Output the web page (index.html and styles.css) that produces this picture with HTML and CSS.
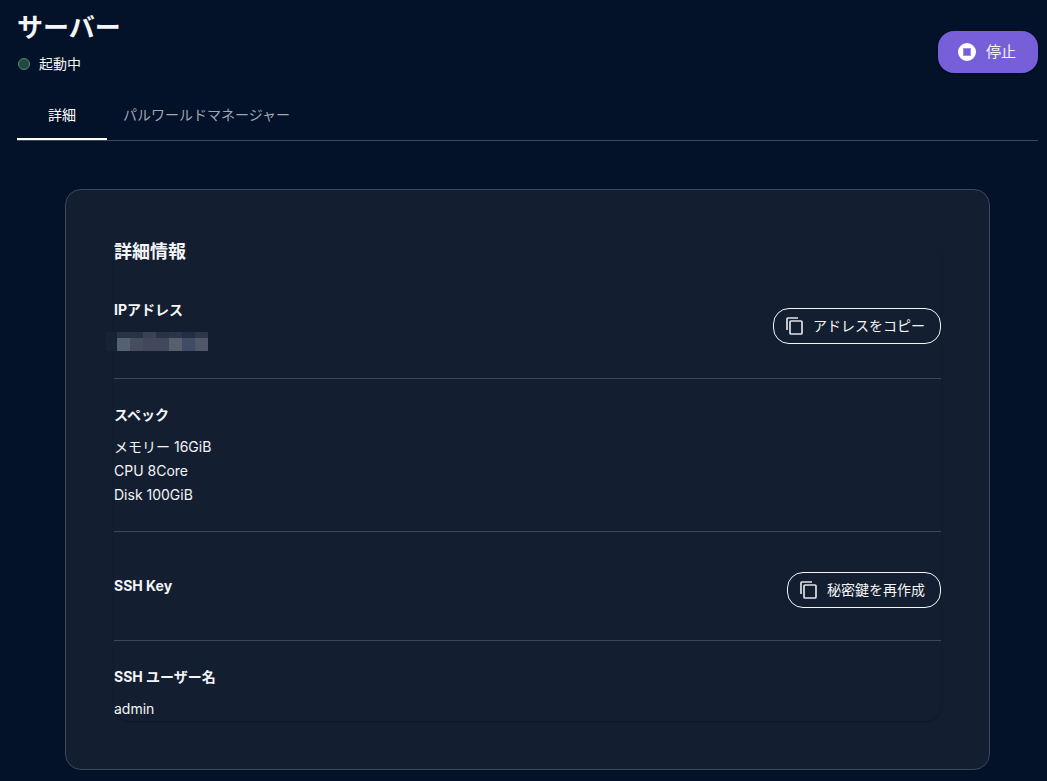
FILE: index.html
```html
<!DOCTYPE html>
<html lang="ja">
<head>
  <meta charset="UTF-8">
  <title>サーバー</title>
  <meta name="viewport" content="width=device-width, initial-scale=1.0">
  <link rel="stylesheet" href="styles.css">
</head>
<body>
  <header class="page-header">
    <div>
      <h1>サーバー</h1>
      <p class="status"><span class="status-dot"></span>起動中</p>
    </div>
    <button type="button" class="stop-btn">
      <svg width="20" height="20" viewBox="0 0 20 20" aria-hidden="true">
        <path fill="#fff" fill-rule="evenodd" d="M10 1a9 9 0 1 0 0 18a9 9 0 0 0 0-18zM6 6h8v8H6z"/>
        <path fill="#fff" fill-rule="evenodd" d="M6 6h8v8H6zM7 7v6h6V7z" opacity=".3"/>
      </svg>
      停止
    </button>
  </header>

  <nav class="tabs">
    <a href="#detail" class="active">詳細</a>
    <a href="#manager">パルワールドマネージャー</a>
  </nav>

  <main class="card" id="detail">
    <div class="card-inner">
      <h2>詳細情報</h2>

      <section class="row">
        <div>
          <h3>IPアドレス</h3>
          <!-- masked address -->
          <div class="masked">
            <svg width="102" height="20" viewBox="0 0 102 20" shape-rendering="crispEdges" role="img" aria-label="非表示">
              <path fill="#172235" d="M0 0h11v19H0z"/>
              <path fill="#273347" d="M11 0h26v6H11z"/>
              <path fill="#3b4253" d="M37 0h13v6H37z"/>
              <path fill="#263247" d="M50 0h13v6H50z"/>
              <path fill="#2b3448" d="M63 0h13v6H63z"/>
              <path fill="#212e44" d="M76 0h13v6H76z"/>
              <path fill="#2d364a" d="M89 0h13v6H89z"/>
              <path fill="#536170" d="M11 6h13v13H11z"/>
              <path fill="#464e5e" d="M24 6h13v13H24z"/>
              <path fill="#40485a" d="M37 6h26v13H37z"/>
              <path fill="#595e6d" d="M63 6h13v13H63z"/>
              <path fill="#404c65" d="M76 6h13v13H76z"/>
              <path fill="#505868" d="M89 6h13v13H89z"/>
            </svg>
          </div>
        </div>
        <button type="button" class="copy-btn">
          <svg width="20" height="20" viewBox="0 0 20 20" aria-hidden="true">
            <path d="M2 14V3q0-1 1-1h10"/>
            <rect x="5" y="5" width="12" height="13" rx="1"/>
          </svg>
          アドレスをコピー
        </button>
      </section>

      <section class="row">
        <div>
          <h3>スペック</h3>
          <p>メモリー 16GiB</p>
          <p>CPU 8Core</p>
          <p>Disk 100GiB</p>
        </div>
      </section>

      <section class="row key-row">
        <h3>SSH Key</h3>
        <button type="button" class="copy-btn">
          <svg width="20" height="20" viewBox="0 0 20 20" aria-hidden="true">
            <path d="M2 14V3q0-1 1-1h10"/>
            <rect x="5" y="5" width="12" height="13" rx="1"/>
          </svg>
          秘密鍵を再作成
        </button>
      </section>

      <section class="row">
        <div>
          <h3>SSH ユーザー名</h3>
          <p>admin</p>
        </div>
      </section>
    </div>
  </main>
</body>
</html>
```

FILE: styles.css
```css
* {
  box-sizing: border-box;
}
body {
  margin: 0;
  padding: 8px 9px 11px 17px;
  background-color: #031129;
  color: #f4f5f7;
  font-family: Inter, "Noto Sans CJK JP", sans-serif;
  font-size: 14px;
  line-height: 24px;
}
h1, h2, h3, p {
  margin: 0;
}
h1 {
  font-size: 26px;
  line-height: 40px;
}
h2 {
  font-size: 18px;
  line-height: 28px;
  margin-bottom: 8px;
}
h3 {
  font-size: 14px;
  font-weight: 700;
  margin-bottom: 8px;
}
.page-header {
  display: flex;
  justify-content: space-between;
  align-items: flex-start;
  height: 88px;
}
.status {
  display: flex;
  align-items: center;
  gap: 9px;
  margin-top: 4px;
}
.status-dot {
  width: 12px;
  height: 12px;
  margin-left: 1px;
  border: 1px solid #3f9474;
  border-radius: 50%;
  background-color: #24483f;
}
button {
  display: flex;
  align-items: center;
  flex-shrink: 0;
  color: #f4f5f7;
  font-family: inherit;
  font-size: 14px;
  line-height: 24px;
  cursor: pointer;
}
.stop-btn {
  align-self: center;
  gap: 9px;
  height: 42px;
  padding: 0 22px 0 19px;
  border: none;
  border-radius: 16px;
  background-color: #765fd9;
  font-size: 15px;
  box-shadow: 0 1px 2px rgba(0, 0, 0, 0.3);
}
.tabs {
  display: flex;
  height: 45px;
  border-bottom: 1px solid #3c475b;
}
.tabs a {
  display: flex;
  justify-content: center;
  min-width: 90px;
  height: 44px;
  padding: 7px 16px 0;
  color: #9fa5ae;
  text-decoration: none;
}
.tabs .active {
  color: #fff;
  border-bottom: 2px solid #fff;
}
.card {
  margin: 48px;
  margin-bottom: 0;
  padding: 48px;
  border: 1px solid #3c475b;
  border-radius: 16px;
  background-color: #131f31;
}
.card-inner {
  border-radius: 16px;
  box-shadow: 0 1px 2px rgba(0, 0, 0, 0.3);
}
.row {
  display: flex;
  justify-content: space-between;
  align-items: center;
  padding: 24px 0;
  border-bottom: 1px solid #3c475b;
}
.row:last-child {
  padding-bottom: 0;
  border-bottom: none;
}
.key-row {
  padding: 40px 0 32px;
}
.masked {
  display: flex;
  align-items: center;
  height: 24px;
  margin-left: -8px;
}
.copy-btn {
  gap: 8px;
  height: 36px;
  padding: 0 15px 0 11px;
  border: 1px solid #f4f5f7;
  border-radius: 16px;
  background-color: transparent;
}
.copy-btn svg {
  fill: none;
  stroke: #dfe2e8;
  stroke-width: 1.7;
}
```
